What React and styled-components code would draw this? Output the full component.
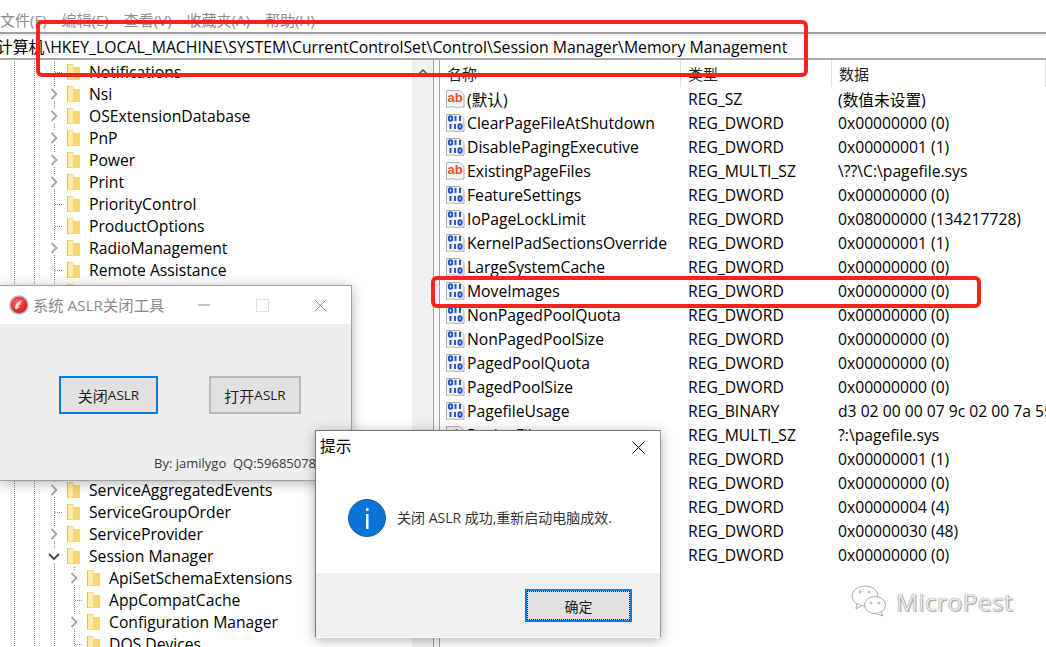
import React from "react";
import styled, { createGlobalStyle } from "styled-components";

const treeRows = [
  ["Notifications", 0, "leaf"],
  ["Nsi", 0, "closed"],
  ["OSExtensionDatabase", 0, "closed"],
  ["PnP", 0, "closed"],
  ["Power", 0, "closed"],
  ["Print", 0, "closed"],
  ["PriorityControl", 0, "leaf"],
  ["ProductOptions", 0, "leaf"],
  ["RadioManagement", 0, "closed"],
  ["Remote Assistance", 0, "leaf"],
  ["", 0, "leaf"],
  ["", 0, "leaf"],
  ["", 0, "leaf"],
  ["", 0, "leaf"],
  ["", 0, "leaf"],
  ["", 0, "leaf"],
  ["", 0, "leaf"],
  ["", 0, "leaf"],
  ["", 0, "leaf"],
  ["ServiceAggregatedEvents", 0, "closed"],
  ["ServiceGroupOrder", 0, "leaf"],
  ["ServiceProvider", 0, "closed"],
  ["Session Manager", 0, "open"],
  ["ApiSetSchemaExtensions", 1, "closed"],
  ["AppCompatCache", 1, "leaf"],
  ["Configuration Manager", 1, "closed"],
  ["DOS Devices", 1, "leaf"],
];

const valueRows = [
  ["(默认)", "REG_SZ", "(数值未设置)", "ab"],
  ["ClearPageFileAtShutdown", "REG_DWORD", "0x00000000 (0)"],
  ["DisablePagingExecutive", "REG_DWORD", "0x00000001 (1)"],
  ["ExistingPageFiles", "REG_MULTI_SZ", "\\??\\C:\\pagefile.sys", "ab"],
  ["FeatureSettings", "REG_DWORD", "0x00000000 (0)"],
  ["IoPageLockLimit", "REG_DWORD", "0x08000000 (134217728)"],
  ["KernelPadSectionsOverride", "REG_DWORD", "0x00000001 (1)"],
  ["LargeSystemCache", "REG_DWORD", "0x00000000 (0)"],
  ["MoveImages", "REG_DWORD", "0x00000000 (0)"],
  ["NonPagedPoolQuota", "REG_DWORD", "0x00000000 (0)"],
  ["NonPagedPoolSize", "REG_DWORD", "0x00000000 (0)"],
  ["PagedPoolQuota", "REG_DWORD", "0x00000000 (0)"],
  ["PagedPoolSize", "REG_DWORD", "0x00000000 (0)"],
  ["PagefileUsage", "REG_BINARY", "d3 02 00 00 07 9c 02 00 7a 55"],
  ["PagingFiles", "REG_MULTI_SZ", "?:\\pagefile.sys", "ab"],
  ["", "REG_DWORD", "0x00000001 (1)"],
  ["", "REG_DWORD", "0x00000000 (0)"],
  ["", "REG_DWORD", "0x00000004 (4)"],
  ["", "REG_DWORD", "0x00000030 (48)"],
  ["", "REG_DWORD", "0x00000000 (0)"],
];

const GlobalStyle = createGlobalStyle`
  html, body {
    margin: 0;
    padding: 0;
    background: #fff;
    overflow: hidden;
  }
`;

const Page = styled.div`
  position: relative;
  width: 1046px;
  height: 647px;
  overflow: hidden;
  background: #fff;
  color: #000;
  font-family: "Open Sans", "Noto Sans CJK SC", sans-serif;
  font-size: 15.7px;
`;

const MenuBar = styled.div`
  height: 32px;
  padding-top: 7px;
  box-sizing: border-box;
  display: flex;
  align-items: center;
  gap: 15px;
  font-size: 15px;
  color: #8c8c8c;
  white-space: nowrap;
`;

const AddressBar = styled.div`
  height: 28px;
  box-sizing: border-box;
  border-top: 2px solid #a0a0a0;
  border-bottom: 2px solid #a8a8a8;
  box-shadow: inset 0 2px #f0f0f0;
  display: flex;
  align-items: center;
  white-space: nowrap;
  overflow: hidden;
  font-size: 15.8px;
`;

const AddressText = styled.span`
  margin-left: -3px;
`;

const Split = styled.div`
  display: flex;
  height: 587px;
`;

const TreePane = styled.div`
  width: 434px;
  display: flex;
  flex-shrink: 0;
  border-right: 1px solid #a0a0a0;
  box-sizing: border-box;
`;

const TreeList = styled.div`
  flex: 1;
  overflow: hidden;
  padding-top: 1px;
`;

const dots = "repeating-linear-gradient(to bottom, #8a8a8a 0 1px, transparent 1px 2px)";

const TreeRow = styled.div`
  height: 22px;
  display: flex;
  align-items: center;
  padding-left: ${(p) => 48 + p.$level * 20}px;
  white-space: nowrap;
  background-image: ${dots}, ${dots}, ${dots}, ${(p) => (p.$level ? dots : "none")};
  background-size: 1px 100%;
  background-repeat: no-repeat;
  background-position: 14px 0, 34px 0, 54px 0, 74px 0;
`;

const Expander = styled.span`
  position: relative;
  width: 12px;
  height: 14px;
  margin-right: 7px;
  display: flex;
  align-items: center;
  justify-content: center;
  background: ${(p) => (p.$leaf ? "transparent" : "#fff")};
`;

const LeafTick = styled.span`
  position: absolute;
  left: 7px;
  top: 7px;
  width: 8px;
  height: 1px;
  background-image: repeating-linear-gradient(to right, #8a8a8a 0 1px, transparent 1px 2px);
`;

const RowLabel = styled.span`
  margin-left: 9px;
`;

const ScrollTrack = styled.div`
  width: 21px;
  background: #f0f0f0;
  display: flex;
  justify-content: center;
  align-items: flex-start;
  padding-top: 9px;
  box-sizing: border-box;
`;

const Sash = styled.div`
  width: 5px;
  background: #f8f8f8;
  border-right: 1px solid #a0a0a0;
  flex-shrink: 0;
`;

const ValuePane = styled.div`
  flex: 1;
  min-width: 0;
`;

const ValueHeader = styled.div`
  height: 27px;
  display: grid;
  grid-template-columns: 241px 151px 1fr;
  align-items: center;
  color: #222;
  font-size: 15px;
`;

const HeaderCell = styled.div`
  height: 100%;
  display: flex;
  align-items: center;
  padding-left: 7px;
  box-sizing: border-box;
  border-right: 1px solid #e0e0e0;
`;

const ValueRow = styled.div`
  height: 24px;
  display: grid;
  grid-template-columns: 248px 150px 1fr;
  align-items: center;
  white-space: nowrap;
`;

const NameCell = styled.div`
  display: flex;
  align-items: center;
  gap: 1px;
  padding-left: 5px;
`;

const Cell = styled.div`
  overflow: hidden;
`;

const RedBox = styled.div`
  position: absolute;
  left: ${(p) => p.$left}px;
  top: ${(p) => p.$top}px;
  width: ${(p) => p.$width}px;
  height: ${(p) => p.$height}px;
  border: 4px solid #f8241a;
  border-radius: 6px;
  box-sizing: border-box;
`;

const Window = styled.div`
  position: absolute;
  background: #fff;
  border: 1px solid #a0a0a0;
  box-sizing: border-box;
  box-shadow: 0 2px 12px rgba(0, 0, 0, 0.3);
  display: flex;
  flex-direction: column;
`;

const ToolWindow = styled(Window)`
  left: -1px;
  top: 285px;
  width: 353px;
  height: 196px;
`;

const MessageWindow = styled(Window)`
  left: 315px;
  top: 430px;
  width: 346px;
  height: 208px;
  border-color: #777 #999 transparent #777;
`;

const ToolTitle = styled.div`
  height: 38px;
  display: flex;
  align-items: center;
  flex-shrink: 0;
  padding-left: 9px;
  padding-right: 2px;
  color: #8a8a8a;
  font-size: 15.3px;
  white-space: nowrap;
`;

const ToolTitleText = styled.span`
  flex: 1;
  margin: 0 0 3px 4px;
`;

const Caption = styled.span`
  width: 58px;
  display: flex;
  justify-content: center;
`;

const ToolBody = styled.div`
  flex: 1;
  background: #eee;
  display: flex;
  flex-direction: column;
`;

const ToolButtons = styled.div`
  display: flex;
  gap: 51px;
  padding: 52px 0 0 59px;
`;

const FlatButton = styled.div`
  height: 38px;
  width: ${(p) => p.$width}px;
  box-sizing: border-box;
  border: 2px solid ${(p) => (p.$focused ? "#0a7bd9" : "#b8b8b8")};
  background: #e1e1e1;
  display: flex;
  align-items: center;
  justify-content: center;
  font-size: 15px;
  color: #1c1c1c;
`;

const Latin = styled.span`
  font-size: 13.5px;
`;

const Credit = styled.div`
  margin-top: 40px;
  padding-left: 154px;
  font-size: 13px;
  color: #3c3c3c;
  white-space: nowrap;
`;

const MessageTitle = styled.div`
  height: 32px;
  display: flex;
  align-items: center;
  justify-content: space-between;
  flex-shrink: 0;
  padding: 0 15px 0 4px;
`;

const MessageTitleText = styled.span`
  margin-bottom: 4px;
`;

const MessageBody = styled.div`
  height: 110px;
  display: flex;
  align-items: center;
  padding-left: 32px;
  box-sizing: border-box;
  gap: 11px;
  font-size: 14px;
  color: #333;
  white-space: nowrap;
`;

const MessageText = styled.span`
  margin-bottom: 2px;
`;

const MessageFooter = styled.div`
  flex: 1;
  background: #f0f0f0;
  display: flex;
  justify-content: flex-end;
  padding: 16px 28px 0 0;
`;

const OkButton = styled.div`
  width: 107px;
  height: 33px;
  box-sizing: border-box;
  border: 2px solid #0a7bd9;
  background: #e1e1e1;
  outline: 1px dotted #111;
  outline-offset: -3px;
  display: flex;
  align-items: center;
  justify-content: center;
  font-size: 14px;
  color: #1c1c1c;
`;

const Watermark = styled.div`
  position: absolute;
  left: 851px;
  top: 585px;
  display: flex;
  align-items: center;
  gap: 9px;
  font-size: 24.3px;
  letter-spacing: 0.5px;
  color: #ececec;
  text-shadow: 0 0 1px #555, 1px 1px 1px #aaa;
`;

function Folder() {
  return (
    <svg width="13" height="16" viewBox="0 0 13 16">
      <path d="M0 0h6l1 3h6v13H0z" fill="#f8d675" />
      <path d="M1 1h5v14H1z" fill="#fdecb0" />
      <path d="M0 0h1v16H0z" fill="#e8bd5a" />
    </svg>
  );
}

function Chevron({ open }) {
  return (
    <svg width="12" height="12" viewBox="0 0 12 12">
      <path
        d={open ? "M1 4l5 5 5-5" : "M3.500 1l5 5-5 5"}
        fill="none"
        stroke={open ? "#404040" : "#a6a6a6"}
        strokeWidth="1.800"
      />
    </svg>
  );
}

function ValueIcon({ kind }) {
  return (
    <svg width="21" height="21" viewBox="0 0 21 21" style={{ flexShrink: 0 }}>
      <path
        d="M1.500 1.500h13l4.500 4v13c-3-2-5 1-8 0s-5-1-9.500 0z"
        fill="#f4f4f4"
        stroke="#aeaeae"
      />
      {kind === "ab" ? (
        <text
          x="2.500"
          y="13"
          fontFamily="Liberation Sans"
          fontWeight="700"
          fontSize="13"
          fill="#dc5229"
        >
          ab
        </text>
      ) : (
        <g fill="none" stroke="#2155c9" strokeWidth="2">
          <ellipse cx="5.500" cy="5.500" rx="1.700" ry="2.300" />
          <path d="M10.500 3v5M15 3v5" />
          <path d="M5.500 11v5M10 11v5" />
          <ellipse cx="15" cy="13.500" rx="1.700" ry="2.300" />
        </g>
      )}
    </svg>
  );
}

function CloseGlyph({ color }) {
  return (
    <svg width="13" height="13" viewBox="0 0 13 13">
      <path d="M.500.500l12 12M12.500.500l-12 12" stroke={color} fill="none" />
    </svg>
  );
}

function AppLogo() {
  return (
    <svg width="20" height="20" viewBox="0 0 20 20">
      <defs>
        <radialGradient id="ball" cx="0.400" cy="0.350" r="0.700">
          <stop offset="0" stopColor="#f76a62" />
          <stop offset="1" stopColor="#d5151a" />
        </radialGradient>
      </defs>
      <circle cx="10" cy="10" r="9.800" fill="#b9b9b9" />
      <circle cx="10" cy="10" r="8.200" fill="url(#ball)" />
      <path d="M6 13c0-4 3-7 8-8-2 2-3 3-2.500 4.500L9 10.500l1.500 1-3 3z" fill="#fbd3cd" />
    </svg>
  );
}

function InfoIcon() {
  return (
    <svg width="38" height="38" viewBox="0 0 38 38">
      <circle cx="19" cy="19" r="18.500" fill="#0a74d4" stroke="#1b5c9e" />
      <rect x="18" y="15" width="2.500" height="15" fill="#fff" />
      <rect x="18" y="9" width="2.500" height="3" fill="#fff" />
    </svg>
  );
}

function WeChat() {
  return (
    <svg width="36" height="33" viewBox="0 0 36 33" fill="#fff" stroke="#aaa">
      <ellipse cx="14" cy="11" rx="13" ry="10" />
      <path d="M6 19l-1 5 5-3" />
      <ellipse cx="24" cy="20" rx="10.500" ry="8.500" />
      <path d="M30 27l2 4-6-2" />
      <circle cx="20" cy="18" r="1" />
      <circle cx="28" cy="18" r="1" />
      <circle cx="9" cy="7" r="1" />
      <circle cx="18" cy="7" r="1" />
    </svg>
  );
}

export default function App() {
  return (
    <Page>
      <GlobalStyle />
      <MenuBar>
        <span>文件(F)</span>
        <span>编辑(E)</span>
        <span>查看(V)</span>
        <span>收藏夹(A)</span>
        <span>帮助(H)</span>
      </MenuBar>
      <AddressBar>
        <AddressText>
          计算机\HKEY_LOCAL_MACHINE\SYSTEM\CurrentControlSet\Control\Session Manager\Memory Management
        </AddressText>
      </AddressBar>
      <Split>
        <TreePane>
          <TreeList>
            {treeRows.map(([name, level, state], i) => (
              <TreeRow key={i} $level={level}>
                <Expander $leaf={state === "leaf"}>
                  {state === "leaf" ? <LeafTick /> : <Chevron open={state === "open"} />}
                </Expander>
                <Folder />
                <RowLabel>{name}</RowLabel>
              </TreeRow>
            ))}
          </TreeList>
          <ScrollTrack>
            <svg width="10" height="6" viewBox="0 0 10 6">
              <path d="M1 5l4-4 4 4" fill="none" stroke="#555" strokeWidth="1.500" />
            </svg>
          </ScrollTrack>
        </TreePane>
        <Sash />
        <ValuePane>
          <ValueHeader>
            <HeaderCell>名称</HeaderCell>
            <HeaderCell>类型</HeaderCell>
            <HeaderCell>数据</HeaderCell>
          </ValueHeader>
          {valueRows.map(([name, type, data, kind], i) => (
            <ValueRow key={i}>
              <NameCell>
                <ValueIcon kind={kind} />
                {name}
              </NameCell>
              <Cell>{type}</Cell>
              <Cell>{data}</Cell>
            </ValueRow>
          ))}
        </ValuePane>
      </Split>

      <RedBox $left={36} $top={20} $width={772} $height={57} />
      <RedBox $left={431} $top={276} $width={550} $height={32} />

      <ToolWindow>
        <ToolTitle>
          <AppLogo />
          <ToolTitleText>系统 ASLR关闭工具</ToolTitleText>
          <Caption>
            <svg width="12" height="2" viewBox="0 0 12 2">
              <path d="M0 1h12" stroke="#8a8a8a" />
            </svg>
          </Caption>
          <Caption>
            <svg width="13" height="13" viewBox="0 0 13 13">
              <rect x=".5" y=".5" width="12" height="12" fill="none" stroke="#e0e0e0" />
            </svg>
          </Caption>
          <Caption>
            <CloseGlyph color="#8a8a8a" />
          </Caption>
        </ToolTitle>
        <ToolBody>
          <ToolButtons>
            <FlatButton $width={99} $focused>
              关闭<Latin>ASLR</Latin>
            </FlatButton>
            <FlatButton $width={92}>
              打开<Latin>ASLR</Latin>
            </FlatButton>
          </ToolButtons>
          <Credit>By: jamilygo&nbsp; QQ:596850783</Credit>
        </ToolBody>
      </ToolWindow>

      <MessageWindow>
        <MessageTitle>
          <MessageTitleText>提示</MessageTitleText>
          <CloseGlyph color="#000" />
        </MessageTitle>
        <MessageBody>
          <InfoIcon />
          <MessageText>关闭 ASLR 成功,重新启动电脑成效.</MessageText>
        </MessageBody>
        <MessageFooter>
          <OkButton>确定</OkButton>
        </MessageFooter>
      </MessageWindow>

      <Watermark>
        <WeChat />
        MicroPest
      </Watermark>
    </Page>
  );
}
